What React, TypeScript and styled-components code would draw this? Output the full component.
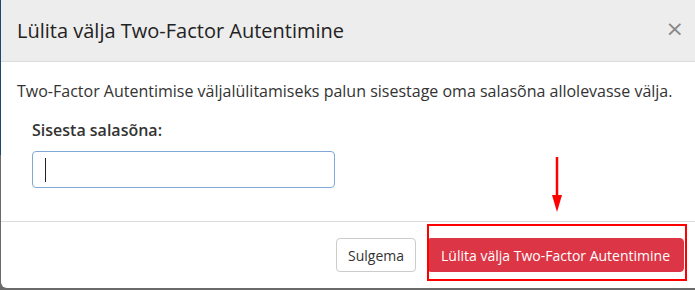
import styled, { createGlobalStyle } from "styled-components";

const GlobalStyle = createGlobalStyle`
  html, body {
    margin: 0;
    padding: 0;
    width: 695px;
    height: 290px;
    overflow: hidden;
    background: linear-gradient(to bottom, #174c6e 0, #174c6e 155px, #6a6a6a 155px);
    font-family: "Open Sans", "Liberation Sans", sans-serif;
  }
`;

const Backdrop = styled.div`
  width: 695px;
  height: 290px;
  padding-left: 1px;
  box-sizing: border-box;
  position: relative;
`;

const Dialog = styled.div`
  width: 694px;
  height: 288px;
  background: #fff;
  border-radius: 0 0 0 6px;
  display: flex;
  flex-direction: column;
  color: #333;
`;

const Header = styled.div`
  height: 61px;
  background: #ededed;
  border-bottom: 1px solid #dcdcdc;
  display: flex;
  align-items: center;
  justify-content: space-between;
  padding: 0 17px 0 16px;
`;

const Title = styled.h4`
  margin: 0;
  font-size: 20px;
  font-weight: 400;
  color: #222;
`;

const Close = styled.button`
  border: none;
  background: none;
  padding: 0;
  font-family: "DejaVu Sans", sans-serif;
  font-size: 22px;
  line-height: 1;
  color: #888;
  margin-right: -6px;
  margin-top: -3px;
`;

const Body = styled.div`
  flex: 1;
  padding: 18px 16px 0;
  border-bottom: 1px solid #dcdcdc;
`;

const Lead = styled.p`
  margin: 0;
  font-size: 16px;
  line-height: 22px;
`;

const Group = styled.div`
  margin-top: 17px;
  padding-left: 15px;
`;

const Label = styled.label`
  display: block;
  font-size: 16px;
  font-weight: 600;
  line-height: 22px;
  color: #333;
`;

const Input = styled.div`
  margin-top: 10px;
  width: 303px;
  height: 37px;
  box-sizing: border-box;
  border: 1px solid #80a9d9;
  border-radius: 4px;
  display: flex;
  align-items: center;
  padding-left: 12px;
`;

const Caret = styled.span`
  width: 1px;
  height: 24px;
  background: #222;
`;

const Footer = styled.div`
  height: 66px;
  display: flex;
  justify-content: flex-end;
  align-items: flex-start;
  gap: 11px;
  padding: 16px 11px 0 0;
  box-sizing: border-box;
`;

const Button = styled.button<{ $danger?: boolean }>`
  height: 34px;
  box-sizing: border-box;
  border-radius: 4px;
  font-family: "Open Sans", "Liberation Sans", sans-serif;
  font-size: 14px;
  padding: 0 ${(p) => (p.$danger ? "13px" : "11px")};
  border: 1px solid ${(p) => (p.$danger ? "#dc3545" : "#ccc")};
  background: ${(p) => (p.$danger ? "#dc3545" : "#fff")};
  color: ${(p) => (p.$danger ? "#fff" : "#333")};
`;

const Highlight = styled.div`
  position: absolute;
  left: 427px;
  top: 224px;
  width: 260px;
  height: 57px;
  box-sizing: border-box;
  border: 2px solid #ff0000;
`;

const Arrow = styled.svg`
  position: absolute;
  left: 551px;
  top: 157px;
`;

export default function App() {
  return (
    <>
      <GlobalStyle />
      <Backdrop>
        <Dialog>
          <Header>
            <Title>Lülita välja Two-Factor Autentimine</Title>
            <Close>×</Close>
          </Header>
          <Body>
            <Lead>
              Two-Factor Autentimise väljalülitamiseks palun sisestage oma
              salasõna allolevasse välja.
            </Lead>
            <Group>
              <Label>Sisesta salasõna:</Label>
              <Input>
                <Caret />
              </Input>
            </Group>
          </Body>
          <Footer>
            <Button>Sulgema</Button>
            <Button $danger>Lülita välja Two-Factor Autentimine</Button>
          </Footer>
        </Dialog>
        <Highlight />
        <Arrow width="12" height="56" viewBox="0 0 12 56">
          <line x1="6" y1="0" x2="6" y2="42" stroke="#ff0000" strokeWidth="2.5" />
          <polygon points="1,38 11,38 6,55" fill="#ff0000" />
        </Arrow>
      </Backdrop>
    </>
  );
}
